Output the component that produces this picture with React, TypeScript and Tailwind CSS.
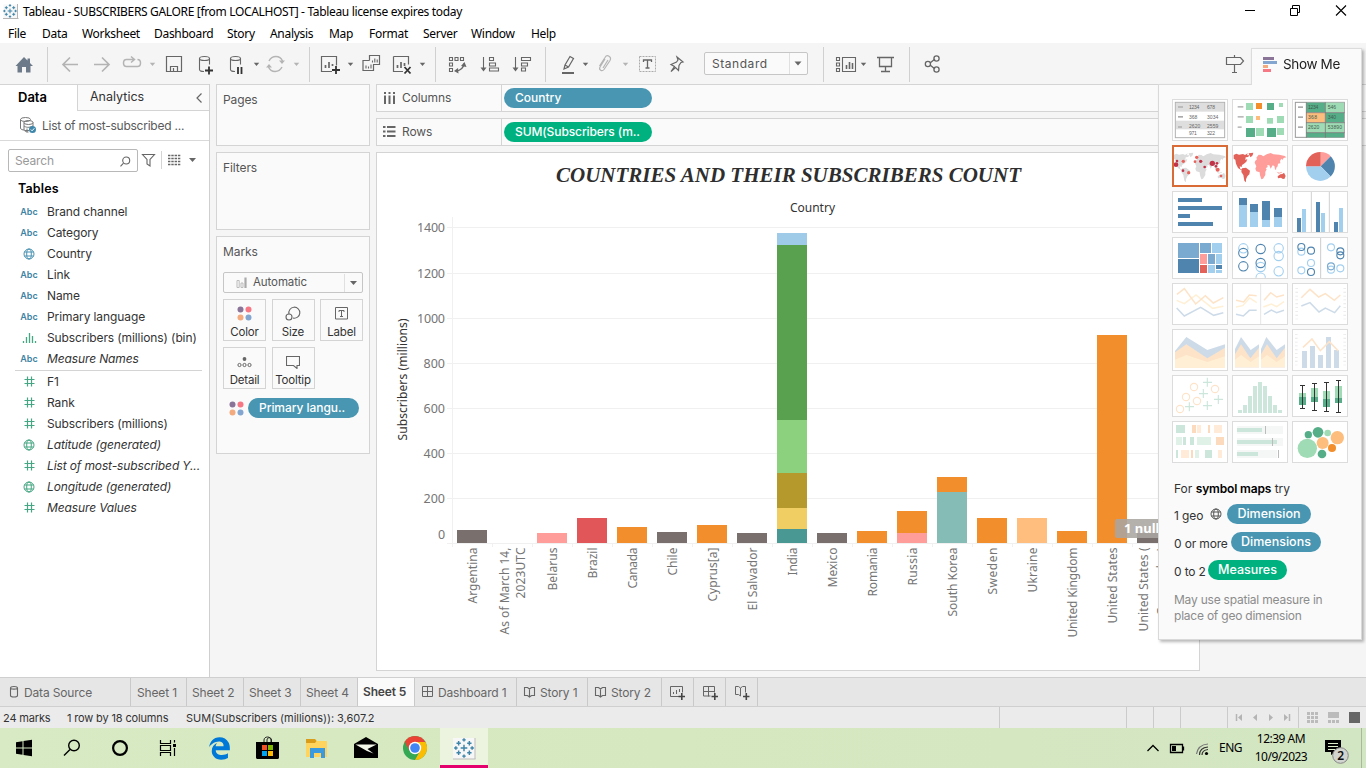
import React from 'react';
import { FaEdgeLegacy } from 'react-icons/fa6';

type Kids = { children?: React.ReactNode };

/* A fixed-width strip of a bar. Shapes inside use the window's coordinates. */
function Slot({ x, y, w, h, children }: { x: number; y: number; w: number; h: number } & Kids) {
  return (
    <svg width={w} height={h} viewBox={`${x} ${y} ${w} ${h}`} fill="none" className="block shrink-0">
      {children}
    </svg>
  );
}

const Caret = ({ x, y = 64, c = '#666' }: { x: number; y?: number; c?: string }) => (
  <path d={`M${x - 2.7} ${y - 1.3}h5.4l-2.7 3.2z`} fill={c} />
);
const Sep = ({ x }: { x: number }) => <path d={`M${x} 47v35`} stroke="#d0d0d0" />;

function TableauMark({ x, y }: { x: number; y: number }) {
  const crosses = [
    [0, -5.6, 1.2], [0, 5.6, 1.2], [-5.6, 0, 1.2], [5.6, 0, 1.2],
    [-3.7, -3.3, 1.5], [3.7, -3.3, 1.5], [-3.7, 3.3, 1.5], [3.7, 3.3, 1.5], [0, 0, 2.3],
  ];
  return (
    <g stroke="#3d84a8" strokeWidth="1">
      {crosses.map(([dx, dy, r], i) => (
        <path key={i} d={`M${x + dx - r} ${y + dy}h${2 * r}M${x + dx} ${y + dy - r}v${2 * r}`} />
      ))}
    </g>
  );
}

function TitleBar() {
  return (
    <div className="flex h-6 items-center bg-white font-['Noto_Sans'] text-[12px] text-black">
      <Slot x={0} y={0} w={23} h={24}>
        <path d="M3.5 4.500h14v14h-14z" fill="#f7f7f7" />
        <path d="M3 18.500h15.500M17.500 4v14" stroke="#b5b5b5" />
        <TableauMark x={10} y={11} />
      </Slot>
      <span className="w-[1216px] whitespace-nowrap text-[12px] tracking-[-0.335px]">
        Tableau - SUBSCRIBERS GALORE [from LOCALHOST] - Tableau license expires today
      </span>
      <Slot x={1239} y={0} w={127} h={24}>
        <path d="M1245 10.500h10" stroke="#000" />
        <path d="M1290.500 8.500h7v7h-7zM1292.500 8v-2.500h7v7h-2" stroke="#000" />
        <path d="M1336 5.500l10 10M1346 5.500l-10 10" stroke="#000" strokeWidth="1.1" />
      </Slot>
    </div>
  );
}

function MenuBar() {
  return (
    <div className="flex h-[19px] items-center bg-white pl-2 font-['Noto_Sans'] text-[12px] tracking-[-0.3px] text-black">
      <span className="w-[34px]">File</span>
      <span className="w-[40px]">Data</span>
      <span className="w-[72px]">Worksheet</span>
      <span className="w-[73px]">Dashboard</span>
      <span className="w-[43px]">Story</span>
      <span className="w-[59px]">Analysis</span>
      <span className="w-[40px]">Map</span>
      <span className="w-[54px]">Format</span>
      <span className="w-[48px]">Server</span>
      <span className="w-[60px]">Window</span>
      <span>Help</span>
    </div>
  );
}

function Toolbar() {
  const g = '#666';
  const d = '#b4b4b4';
  return (
    <div className="flex h-[41px] shrink-0 bg-[#f5f5f5]">
      <Slot x={0} y={43} w={56} h={41}>
        <path d="M15.500 66L24 57l3.500 3.500V58.500h2.500V63l3 3h-2.500v6.500h-4.500v-5.500h-4v5.500h-4.500V66z" fill="#6d7a8a" />
        <Sep x={47.5} />
      </Slot>
      <Slot x={56} y={43} w={102} h={41}>
        <path d="M78 64.500H63M70 57.500l-7 7 7 7M94 64.500h15M102 57.500l7 7-7 7" stroke={d} strokeWidth="1.7" />
        <path d="M134 59.500h-7.500c-4 0-4 7 0 7h11c4 0 4-7 0-7M131 56.500l3.500 3-3.500 3" stroke={d} strokeWidth="1.5" />
        <Caret x={152.500} c={d} />
      </Slot>
      <Slot x={158} y={43} w={102} h={41}>
        <path d="M166.500 56.500h15v15h-15zM170.500 71.500v-5h7v5M173.500 68v3" stroke={g} strokeWidth="1.2" />
        <g stroke={g} strokeWidth="1.1">
          <ellipse cx="204.500" cy="58.500" rx="5" ry="2" />
          <path d="M199.500 58.500v11c0 1 2 2 4.500 2M209.500 58.500v6" />
          <ellipse cx="235.500" cy="58.500" rx="5" ry="2" />
          <path d="M230.500 58.500v11c0 1 2 2 4.500 2M240.500 58.500v6" />
        </g>
        <path d="M205 70.500h8M209 66.500v8" stroke="#333" strokeWidth="1.8" />
        <path d="M238 67v7M241.500 67v7" stroke="#333" strokeWidth="1.8" />
        <Caret x={256.500} />
      </Slot>
      <Slot x={260} y={43} w={60} h={41}>
        <path d="M269 61c3-6 11-6 13.500 0M282 67c-3 6-11 6-13.500 0" stroke={d} strokeWidth="1.4" />
        <path d="M285 60.500l-3 3.500-3-3.500zM266 67.500l3-3.500 3 3.500z" fill={d} />
        <Caret x={296.500} c={d} />
        <Sep x={309.5} />
      </Slot>
      <Slot x={320} y={43} w={124} h={41}>
        <g stroke={g} strokeWidth="1.2">
          <path d="M332 71.500h-10.500v-15h15v9M393.500 56.500h15v8M403 71.500h-9.500v-15" />
          <path d="M325.500 68v-3M329 68v-6M332.500 66v-2M397.500 68v-3M401 68v-6M404.500 66v-3" strokeWidth="1.7" />
          <path d="M369.500 60.500v-5h10v9h-6.500M369.500 60.500h-6.500v10h10.500v-6" />
          <path d="M366 68.500v-3M368.500 68.500v-2M371 68.500v-4M372.500 62.500v-2M374.800 62.500v-4M377.200 62.500v-3" strokeWidth="1.1" />
        </g>
        <path d="M332 70h8M336 66v8" stroke="#333" strokeWidth="1.8" />
        <path d="M404.500 67l6 6.500M410.500 67l-6 6.500" stroke="#333" strokeWidth="1.8" />
        <Caret x={350.500} />
        <Caret x={422.500} />
        <Sep x={435.5} />
      </Slot>
      <Slot x={444} y={43} w={106} h={41}>
        <g stroke={g} strokeWidth="1.1">
          <path d="M449.500 57.500h3v3h-3zM455 57.500h3v3h-3zM460.500 57.500h3v3h-3zM449.500 63h3v3h-3zM449.500 68.500h3v3h-3z" />
          <path d="M464 63.500c-.5 4-3 7-8 7.500" strokeWidth="1.4" />
          <path d="M483.500 57v11M489.500 57.500h4v3h-4zM489.500 63h6v3h-6zM489.500 68h9v3h-9z" />
          <path d="M515.500 57v11M521.500 57.500h9v3h-9zM521.500 63h6v3h-6zM521.500 68h4v3h-4z" />
        </g>
        <path d="M461 66l3.500-4 2 5zM458 68l-4 3 4.500 2.500zM480.500 67.500h6l-3 4zM512.500 67.500h6l-3 4z" fill={g} />
        <Sep x={545.5} />
      </Slot>
      <Slot x={550} y={43} w={154} h={41}>
        <path d="M564 69l1-4 5-8.500 3.500 2-5 8.500zM565 65l3.500 2" stroke={g} strokeWidth="1.2" />
        <path d="M562 73h12" stroke={g} strokeWidth="2" />
        <path d="M605 59l-5 8c-1.500 3 2 5 4 2.500l6-9c2-4-3-6.500-5-3l-5.500 8.500M608 60l-5 8" stroke={d} strokeWidth="1.2" />
        <path d="M639.500 56.500h16v15h-16z" stroke="#aaa" strokeDasharray="2 1" />
        <path d="M643.500 62v-2h8v2M647.500 60v8M645.500 68h4" stroke={g} strokeWidth="1.3" />
        <path d="M677 57l6 5-2 .5-2 3-.5 5-3-3-4.500 4 3.500-5-3.500-2 5.500-2.500 1.500-2z" stroke={g} strokeWidth="1.2" />
        <Caret x={585.500} />
        <Caret x={625.500} c={d} />
      </Slot>
      <div className="mt-[9px] flex h-[23px] w-[104px] items-center rounded-[2px] border border-[#c6c6c6] bg-[#fafafa] font-['Inter'] text-[12px] tracking-[0.55px] text-[#555]">
        <span className="w-[84px] pl-[7px]">Standard</span>
        <div className="flex h-full w-[18px] items-center border-l border-[#e0e0e0]">
          <Slot x={790} y={53} w={17} h={21}><path d="M794.500 61.500h7l-3.500 4z" fill={g} /></Slot>
        </div>
      </div>
      <Slot x={808} y={43} w={443} h={41}>
        <Sep x={823.5} />
        <path d="M836.500 57.500h3v3h-3zM836.500 63h3v3h-3zM836.500 68.500h3v3h-3zM842.500 57.500h13v14h-13z" stroke={g} strokeWidth="1.1" />
        <path d="M846.500 69v-4M849.500 69v-7M852.500 69v-6" stroke={g} strokeWidth="1.6" />
        <Caret x={863.500} />
        <path d="M877 57.500h17M879.500 58v8.500h12V58M885.500 66.500v5M881 71.500h9" stroke={g} strokeWidth="1.3" />
        <Sep x={909.5} />
        <path d="M930 63l5-4M930 65l5 4" stroke={g} strokeWidth="1.4" />
        <circle cx="927.900" cy="64" r="2.600" stroke={g} strokeWidth="1.3" />
        <circle cx="936.500" cy="58.500" r="2.600" stroke={g} strokeWidth="1.3" />
        <circle cx="936.500" cy="69.500" r="2.600" stroke={g} strokeWidth="1.3" />
        <path d="M1226.500 57.500h14l3 3.500-3 3.500h-14zM1234.500 55v2M1234.500 64.500v8M1232 72.500h5" stroke={g} strokeWidth="1.2" />
      </Slot>
      <div className="grow" />
    </div>
  );
}

const Globe = ({ c }: { c: string }) => (
  <svg width="12" height="12" viewBox="0 0 12 12" fill="none" stroke={c} className="block shrink-0">
    <circle cx="6" cy="6" r="5" />
    <ellipse cx="6" cy="6" rx="2.300" ry="5" />
    <path d="M1.500 4h9M1.500 8h9" />
  </svg>
);
const Hash = () => (
  <svg width="11" height="11" viewBox="0 0 11 11" fill="none" stroke="#45a683" strokeWidth="1.200" className="block">
    <path d="M3.500 .5v10M7.500 .5v10M.5 3.500h10M.5 7.500h10" />
  </svg>
);

function Field({ kind, name, italic }: { kind: string; name: string; italic?: boolean }) {
  return (
    <div className="flex h-[21px] items-center">
      <div className="flex w-[47px] justify-center pl-[11px]">
        {kind === 'abc' && <span className="pt-[1px] text-[9px] font-semibold text-[#3e83a4]">Abc</span>}
        {kind === 'geo' && <Globe c="#4a92b1" />}
        {kind === 'geom' && <Globe c="#45a683" />}
        {kind === 'num' && <Hash />}
        {kind === 'bin' && (
          <svg width="15" height="11" viewBox="0 0 15 11" stroke="#45a683" strokeWidth="1.300" className="block">
            <path d="M1.500 11V9M4.500 11V5M7.500 11V1M10.500 11V4M13.500 11V9" />
          </svg>
        )}
      </div>
      <span className={italic ? 'pt-px whitespace-nowrap tracking-[-0.12px] italic' : 'pt-px whitespace-nowrap tracking-[-0.1px]'}>{name}</span>
    </div>
  );
}

function DataPane() {
  return (
    <aside className="flex w-[210px] shrink-0 flex-col border-r border-[#cfcfcf] bg-white text-[12px] text-[#333]">
      <div className="flex h-[27px] shrink-0 border-t border-[#d4d4d4]">
        <div className="w-[77px] pl-[18px] text-[13px] leading-[25px] font-semibold text-black">Data</div>
        <div className="flex grow items-center justify-between border-b border-l border-[#d4d4d4] bg-[#fafafa] pr-[7px] pl-3 text-[12.500px]">
          Analytics
          <svg width="6" height="10" viewBox="0 0 6 10" fill="none" stroke="#666" strokeWidth="1.200"><path d="M5.500 .5L1 5l4.500 4.500" /></svg>
        </div>
      </div>
      <div className="flex h-[30px] shrink-0 items-center border-b border-[#d9d9d9] text-[#5a5a5a]">
        <Slot x={0} y={111} w={42} h={29}>
          <g stroke="#777">
            <path d="M20.500 119.500v8.500c0 1.500 2 2 4 2" />
            <ellipse cx="25.500" cy="119.500" rx="5" ry="2" />
            <ellipse cx="28.500" cy="122.500" rx="4.500" ry="2" />
            <path d="M24 122.500v7c0 1.500 2 2.500 4.500 2.500M33 122.500v4M24 126c2 1.500 5 2 9 0M25 130.500h4M27 128.500v4" />
          </g>
          <circle cx="32.500" cy="129.500" r="3.500" fill="#3e87ab" />
          <path d="M30.800 129.500l1.300 1.300 2.200-2.500" stroke="#fff" />
        </Slot>
        <span className="whitespace-nowrap tracking-[-0.24px]">List of most-subscribed ...</span>
      </div>
      <div className="mt-[8px] flex h-[23px] shrink-0 items-center pl-2">
        <div className="flex h-[23px] w-[130px] items-center justify-between rounded-[2px] border border-[#b8b8b8] pt-px pr-[6px] pl-[6px] text-[#999]">
          <span className="tracking-[-0.15px]">Search</span>
          <svg width="11" height="11" viewBox="0 0 11 11" fill="none" stroke="#666" strokeWidth="1.100"><circle cx="6.200" cy="4.500" r="3.500" /><path d="M3.500 7.200L.5 10.300" /></svg>
        </div>
        <Slot x={138} y={149} w={71} h={23}>
          <path d="M142.500 154.500h12l-4.500 5v6.500l-3-2v-4.500z" stroke="#666" strokeWidth="1.100" />
          <path d="M161.500 151v18" stroke="#d4d4d4" />
          <path d="M168 155.500h12.500M168 158.500h12.500M168 161.500h12.500M168 164.500h12.500" stroke="#666" strokeWidth="1.300" strokeDasharray="2.400 .9" />
          <path d="M189 158h7l-3.500 4z" fill="#666" />
        </Slot>
      </div>
      <div className="mt-[7px] h-[22px] shrink-0 pl-[18px] text-[12.500px] leading-[19px] font-semibold tracking-[0.15px] text-black">Tables</div>
      <div>
        <Field kind="abc" name="Brand channel" />
        <Field kind="abc" name="Category" />
        <Field kind="geo" name="Country" />
        <Field kind="abc" name="Link" />
        <Field kind="abc" name="Name" />
        <Field kind="abc" name="Primary language" />
        <Field kind="bin" name="Subscribers (millions) (bin)" />
        <Field kind="abc" name="Measure Names" italic />
      </div>
      <div className="mx-[15px] mr-[7px] mt-px h-px shrink-0 bg-[#d4d4d4]" />
      <div>
        <Field kind="num" name="F1" />
        <Field kind="num" name="Rank" />
        <Field kind="num" name="Subscribers (millions)" />
        <Field kind="geom" name="Latitude (generated)" italic />
        <Field kind="num" name="List of most-subscribed Y..." italic />
        <Field kind="geom" name="Longitude (generated)" italic />
        <Field kind="num" name="Measure Values" italic />
      </div>
    </aside>
  );
}

const FourDots = () => (
  <svg width="15" height="15" viewBox="0 0 15 15" className="block">
    <circle cx="3.500" cy="3.500" r="3" fill="#8a7599" />
    <circle cx="11.500" cy="3.500" r="3" fill="#f77885" />
    <circle cx="3.500" cy="11.500" r="3" fill="#f2aa7e" />
    <circle cx="11.500" cy="11.500" r="3" fill="#82a6cf" />
  </svg>
);

function MarkButton({ label, children }: { label: string } & Kids) {
  return (
    <div className="flex h-[42px] w-[43px] flex-col items-center border border-[#d4d4d4] bg-[#fafafa] pt-[6px]">
      <div className="flex h-[15px] items-center justify-center">{children}</div>
      <span className="mt-[4px] text-[11.500px] leading-[14px] whitespace-nowrap tracking-[-0.2px] text-[#333]">{label}</span>
    </div>
  );
}

function Cards() {
  const box = 'border border-[#d4d4d4] bg-[#fafafa] pl-[6px] text-[12px] text-[#555]';
  return (
    <div className="ml-[6px] flex w-[154px] shrink-0 flex-col gap-[6px] tracking-[-0.1px]">
      <div className={`h-[62px] pt-[6px] ${box}`}>Pages</div>
      <div className={`h-[78px] pt-[6px] ${box}`}>Filters</div>
      <div className={`h-[218px] pt-[6px] ${box}`}>
        Marks
        <div className="mt-[11px] flex h-[21px] w-[140px] items-center rounded-[2px] border border-[#c6c6c6] pt-px text-[11.500px]">
          <svg width="29" height="12" viewBox="0 0 29 12" fill="none" className="shrink-0">
            <path d="M13 3.500h2.200V10.500H13zM17 6h2v4.500h-2z" stroke="#bbb" />
            <path d="M21.500 11V.5" stroke="#aaa" strokeWidth="2.200" />
          </svg>
          <span className="grow">Automatic</span>
          <div className="flex h-full w-[18px] items-center justify-center border-l border-[#e0e0e0]">
            <svg width="7" height="5" viewBox="0 0 7 5"><path d="M0 0h7L3.500 4z" fill="#666" /></svg>
          </div>
        </div>
        <div className="mt-[6px] flex w-[142px] flex-wrap gap-x-[5.500px] gap-y-[6px]">
          <MarkButton label="Color"><FourDots /></MarkButton>
          <MarkButton label="Size">
            <svg width="16" height="15" viewBox="0 0 16 15" fill="none" stroke="#666" strokeWidth="1.100">
              <path d="M4 8a5.500 5.500 0 1 1 4 4" /><circle cx="4" cy="11" r="3" />
            </svg>
          </MarkButton>
          <MarkButton label="Label">
            <svg width="13" height="13" viewBox="0 0 13 13" fill="none" stroke="#666">
              <path d="M.5 .5h12v11.500H.5zM4 5V3.500h5V5M6.500 3.500V9.500M5 9.500h3" />
            </svg>
          </MarkButton>
          <MarkButton label="Detail">
            <svg width="15" height="12" viewBox="0 0 15 12" fill="none" stroke="#666" className="shrink-0">
              <circle cx="7.500" cy="3" r="1.900" fill="#666" stroke="none" />
              <circle cx="2.500" cy="9" r="1.600" /><circle cx="7.500" cy="9" r="1.600" /><circle cx="12.500" cy="9" r="1.600" />
            </svg>
          </MarkButton>
          <MarkButton label="Tooltip">
            <svg width="14" height="14" viewBox="0 0 14 14" fill="none" stroke="#666" strokeWidth="1.100" className="shrink-0">
              <path d="M.5 1.500h13v9H11v3L7.500 10.500H.5z" />
            </svg>
          </MarkButton>
        </div>
        <div className="mt-[9px] flex items-center pl-[6px]">
          <FourDots />
          <div className="ml-[4px] h-5 w-[111px] rounded-full bg-[#4996b2] pl-[11px] text-[12px] leading-[20px] font-medium tracking-[-0.05px] text-white">Primary langu..</div>
        </div>
      </div>
    </div>
  );
}

function Shelf({ label, pill, rows }: { label: string; pill: string; rows?: boolean }) {
  return (
    <div className="flex h-[28px] shrink-0 border border-r-0 border-[#d4d4d4] bg-[#fafafa] text-[12px] text-[#555]">
      <div className="flex w-[125px] items-center border-r border-[#d4d4d4] pl-[6px]">
        <svg width="19" height="12" viewBox="0 0 19 12" fill="none" stroke="#666" strokeWidth="2" className="shrink-0">
          {rows ? (
            <path d="M0 1h2.500M4 1h8.500M0 5.500h2.500M4 5.500h8.500M0 10h2.500M4 10h8.500" />
          ) : (
            <path d="M2 0v2M2 3.500V12M6.500 0v2M6.500 3.500V12M11 0v2M11 3.500V12" />
          )}
        </svg>
        <span className="tracking-[-0.1px]">{label}</span>
      </div>
      <div className={`mt-[3px] ml-[2px] h-5 w-[148px] rounded-full pl-[11px] leading-[20px] font-medium text-white ${rows ? 'bg-[#00b180] tracking-[-0.1px]' : 'bg-[#4996b2] tracking-[0px]'}`}>
        {pill}
      </div>
    </div>
  );
}

const GRAY = '#79706e';
const ORANGE = '#f28e2b';
type Seg = [number, number, string];
const countries: { name: string; len: number; segs: Seg[] }[] = [
  { name: 'Argentina', len: 56, segs: [[530, 543, GRAY]] },
  { name: '', len: 0, segs: [] },
  { name: 'Belarus', len: 43, segs: [[533, 543, '#ff9d9a']] },
  { name: 'Brazil', len: 31, segs: [[518, 543, '#e15759']] },
  { name: 'Canada', len: 41, segs: [[527, 543, ORANGE]] },
  { name: 'Chile', len: 28, segs: [[532, 543, GRAY]] },
  { name: 'Cyprus[a]', len: 54, segs: [[525, 543, ORANGE]] },
  { name: 'El Salvador', len: 63, segs: [[533, 543, GRAY]] },
  { name: 'India', len: 28, segs: [[233, 245, '#a0cbe8'], [245, 420, '#59a14f'], [420, 473, '#8cd17d'], [473, 508, '#b6992d'], [508, 529, '#f1ce63'], [529, 543, '#499894']] },
  { name: 'Mexico', len: 40, segs: [[533, 543, GRAY]] },
  { name: 'Romania', len: 49, segs: [[531, 543, ORANGE]] },
  { name: 'Russia', len: 38, segs: [[511, 533, ORANGE], [533, 543, '#ff9d9a']] },
  { name: 'South Korea', len: 69, segs: [[477, 492, ORANGE], [492, 543, '#86bcb6']] },
  { name: 'Sweden', len: 47, segs: [[518, 543, ORANGE]] },
  { name: 'Ukraine', len: 45, segs: [[518, 543, '#ffbe7d']] },
  { name: 'United Kingdom', len: 90, segs: [[531, 543, ORANGE]] },
  { name: 'United States', len: 76, segs: [[335, 543, ORANGE]] },
  { name: '', len: 0, segs: [[533, 543, GRAY]] },
];

function VText({ x, len, children, end = 547.5 }: { x: number; len: number; end?: number; children: string }) {
  return (
    <text transform={`translate(${x} ${end + len}) rotate(-90)`} textLength={len}>{children}</text>
  );
}

function Chart() {
  const ticks: [string, number, number][] = [
    ['1400', 227.5, 28], ['1200', 273.5, 28], ['1000', 318.5, 28], ['800', 363.5, 21.5],
    ['600', 408.5, 21.5], ['400', 453.5, 21.5], ['200', 498.5, 21.5],
  ];
  return (
    <div className="h-[519px] w-[824px] shrink-0 border border-[#d4d4d4] bg-white">
      <svg width="822" height="517" viewBox="377 153 822 517" className="block font-['Noto_Sans']">
        <text x="556" y="182" textLength="465" fill="#2e2e2e" className="font-['Liberation_Serif'] text-[21px] font-bold italic">
          COUNTRIES AND THEIR SUBSCRIBERS COUNT
        </text>
        <text x="790" y="212" textLength="45" fontSize="12" fill="#333">Country</text>
        <g stroke="#f0f0f0">
          {ticks.map(([t, y]) => <path key={t} d={`M447 ${y}H1199`} />)}
          <path d="M447 543.500H1199M452.500 217v330" />
          {countries.map((_, i) => <path key={i} d={`M${492.5 + 40 * i} 543v4`} />)}
        </g>
        <g fontSize="12.500" fill="#757575">
          {ticks.map(([t, y, l]) => <text key={t} x={445 - l} y={y + 4.5} textLength={l}>{t}</text>)}
          <text x="438" y="539">0</text>
        </g>
        <text transform="translate(406.500 440.500) rotate(-90)" textLength="122" fontSize="12" fill="#333">Subscribers (millions)</text>
        {countries.map((c, i) =>
          c.segs.map(([a, b, fill]) => <rect key={`${i}-${a}`} x={457 + 40 * i} y={a} width="30" height={b - a} fill={fill} />)
        )}
        <g fontSize="12" fill="#757575">
          {countries.map((c, i) => c.name && <VText key={c.name} x={476.5 + 40 * i} len={c.len}>{c.name}</VText>)}
          <VText x={508.5} len={87}>As of March 14,</VText>
          <VText x={525} len={51}>2023UTC</VText>
          <VText x={1148} len={84}>United States (</VText>
          <VText x={1165.500} len={68}>Canada)</VText>
        </g>
        <rect x="1115" y="519" width="70" height="19" rx="2" fill="#aaa5a1" fillOpacity=".88" />
        <text x="1124" y="533" fontSize="13" fontWeight="700" fill="#fff">1 nulls</text>
      </svg>
    </div>
  );
}

function Continents({ west, east }: { west: string; east: string }) {
  return (
    <g>
      <path fill={west} d="M5 30l8-4 8 3 12-2 6 3 8-5-2 6 6-1-2 6-8 1-1 8 6-3-3 8-7 6-6 4-1 6-6-2 2 8 6 2-3 2-10-7-6-13-2-12-5-3zM50 25l14-2-2 8-6 6-4-6zM30 70l12-2 12 9-2 11-6 6-4 9 0 9-5-5-3-17-6-9z" />
      <path fill={east} d="M68 53l2-6 5-4-2-5 7-9 8 1 6 4 10-6 12-4 8 4 18 1 16 4 5 4-8 2-4 6-3-4-4 7 1 7-7 1-1 8-4 4-1 7-3-2-2-10-5-2-6 10-4-10-6-1 1 6-6 4 3 3-4 8 0 9-7 11-5 2-4-12-1-9-10-3-3-8 3-7zM134 80l8 3 8-3-1 3-9 3z" />
      <path fill={west} d="M137 94l8-6 6-1 5-4 5 10-4 9-6-1-4-3-9 2z" />
    </g>
  );
}

function Rects({ c, r }: { c: string; r: number[][] }) {
  return <g fill={c}>{r.map(([x, y, w, h], i) => <rect key={i} x={x} y={y} width={w} height={h} />)}</g>;
}
function Rings({ c, p, r }: { c: string; p: number[][]; r: number }) {
  return <g fill="none" stroke={c} strokeWidth="3.300">{p.map(([x, y], i) => <circle key={i} cx={x} cy={y} r={r} />)}</g>;
}

function Thumb({ children, on }: { on?: boolean } & Kids) {
  return (
    <svg width="56" height="42" viewBox="0 0 168 126" fill="none" className="block">
      <rect x="1.500" y="1.500" width="165" height="123" fill="#fff" stroke="#dcdcdc" strokeWidth="3" />
      {children}
      {on && <rect x="3" y="3" width="162" height="120" stroke="#d96c36" strokeWidth="6" />}
    </svg>
  );
}

const B = '#4e84ae';
const LB = '#a3cfef';
const MB = '#7baad0';
const G = '#56ae88';
const LG = '#9fdcb5';
const PB = '#cddbe9';
const PO = '#fde3c8';
const PY = '#fff0d5';
const PG = '#cce6db';

function Thumbs() {
  return (
    <div className="grid grid-cols-[56px_56px_56px] gap-1">
      <Thumb>
        <rect x="10" y="10" width="148" height="106" stroke="#b0b0b0" strokeWidth="3" />
        <Rects c="#dedede" r={[[12, 12, 144, 26], [12, 65, 144, 26]]} />
        <Rects c="#aaa" r={[[18, 22, 15, 4], [18, 51, 15, 5], [18, 82, 12, 4]]} />
        <g fill="#666" fontSize="15" className="font-['Liberation_Sans']">
          <text x="51" y="31" textLength="31">1234</text><text x="105" y="31" textLength="24">678</text>
          <text x="51" y="59" textLength="25">368</text><text x="105" y="59" textLength="34">3034</text>
          <text x="51" y="86" textLength="34">2620</text><text x="105" y="86" textLength="34">2559</text>
          <text x="51" y="109" textLength="23">971</text><text x="105" y="109" textLength="24">322</text>
        </g>
      </Thumb>
      <Thumb>
        <Rects c="#bbb" r={[[17, 21, 17, 5], [17, 51, 18, 5], [17, 82, 12, 5]]} />
        <Rects c={LG} r={[[42, 12, 21, 21], [141, 12, 12, 12], [42, 51, 21, 21], [105, 57, 18, 17], [135, 51, 21, 21], [72, 87, 24, 24], [135, 87, 21, 21]]} />
        <Rects c={G} r={[[105, 12, 21, 21], [42, 87, 27, 27], [105, 87, 27, 27]]} />
        <Rects c="#f28e2b" r={[[72, 12, 18, 18]]} /><Rects c="#fdbd7c" r={[[72, 51, 12, 12]]} />
      </Thumb>
      <Thumb>
        <rect x="10" y="10" width="147" height="105" stroke="#999" strokeWidth="3" />
        <Rects c={G} r={[[43, 11, 57, 29], [100, 41, 56, 30], [43, 101, 113, 14]]} />
        <Rects c={LG} r={[[100, 11, 56, 29], [43, 71, 113, 30]]} /><Rects c="#fdbd7c" r={[[43, 41, 57, 30]]} />
        <path d="M43 10v106M100 10v106M42 41h116M42 71h116M42 101h116" stroke="#777" strokeWidth="2.500" />
        <Rects c="#aaa" r={[[18, 22, 15, 5], [18, 52, 15, 5], [18, 82, 15, 5]]} />
        <g fill="#3f5c4c" fontSize="15" className="font-['Liberation_Sans']">
          <text x="48" y="31" textLength="31">1234</text><text x="107" y="31" textLength="25">546</text>
          <text x="48" y="61" textLength="27">368</text><text x="107" y="61" textLength="25">340</text>
          <text x="48" y="91" textLength="34">2620</text><text x="107" y="91" textLength="43">53890</text>
        </g>
      </Thumb>

      <Thumb on>
        <Continents west="#dcdcdc" east="#dcdcdc" />
        <g fill="#c2334a">
          <circle cx="12" cy="59" r="7" /><circle cx="15" cy="48" r="4" /><circle cx="86" cy="49" r="5" /><circle cx="121" cy="55" r="8" />
          <circle cx="135" cy="55" r="4" /><circle cx="33" cy="77" r="4" /><circle cx="98" cy="66" r="4" /><circle cx="132" cy="64" r="4" />
        </g>
        <g fill="#e8625b">
          <circle cx="34" cy="49" r="5" /><circle cx="74" cy="37" r="5" /><circle cx="137" cy="74" r="6" /><circle cx="50" cy="83" r="5" /><circle cx="147" cy="93" r="4" /><circle cx="69" cy="50" r="4" />
        </g>
      </Thumb>
      <Thumb><Continents west="#e2625a" east="#ff9d9a" /></Thumb>
      <Thumb>
        <path d="M86 64V21a43 43 0 0 1 30 12.500z" fill="#ff9d9a" />
        <path d="M86 64l30-30.500a43 43 0 0 1 0 61z" fill={B} />
        <path d="M86 64l30 30.500A43 43 0 0 1 42 64z" fill={LB} />
        <path d="M86 64H42A43 43 0 0 1 86 21z" fill="#e2625a" />
      </Thumb>

      <Thumb><Rects c={B} r={[[18, 21, 72, 12], [18, 45, 132, 12], [18, 69, 36, 12], [18, 93, 105, 12]]} /></Thumb>
      <Thumb>
        <Rects c={B} r={[[21, 21, 24, 21], [54, 39, 24, 24], [90, 30, 24, 57], [126, 51, 24, 27]]} />
        <Rects c={LB} r={[[21, 42, 24, 66], [54, 63, 24, 45], [90, 87, 24, 21], [126, 78, 24, 30]]} />
      </Thumb>
      <Thumb>
        <path d="M58 3v120M112 3v120" stroke="#d0d0d0" strokeWidth="3" />
        <Rects c={B} r={[[15, 81, 12, 42], [72, 33, 12, 90], [126, 93, 12, 30]]} />
        <Rects c={LB} r={[[30, 54, 12, 69], [87, 66, 12, 57], [141, 51, 12, 72]]} />
      </Thumb>

      <Thumb>
        <Rects c={MB} r={[[18, 18, 63, 45], [84, 18, 33, 30], [108, 51, 21, 30]]} />
        <Rects c={B} r={[[18, 66, 63, 42], [132, 84, 18, 12]]} />
        <Rects c={LB} r={[[120, 18, 30, 30], [132, 51, 18, 30], [108, 84, 21, 24], [132, 99, 18, 9]]} />
        <Rects c="#ff9d9a" r={[[84, 51, 21, 30]]} /><Rects c="#e2625a" r={[[84, 84, 21, 24]]} />
      </Thumb>
      <Thumb>
        <Rings c={LB} r={14} p={[[34, 34], [140, 34], [140, 57], [86, 90], [140, 103]]} />
        <path d="M72 122a14 14 0 0 1 28 0" stroke={LB} strokeWidth="3.300" />
        <Rings c={B} r={14} p={[[34, 48], [34, 88], [86, 36], [86, 78]]} />
      </Thumb>
      <Thumb>
        <path d="M86 3v120" stroke="#ccc" strokeWidth="3" />
        <Rings c={LB} r={10.500} p={[[28, 44], [57, 78], [28, 100], [117, 31], [117, 98], [145, 94]]} />
        <Rings c={B} r={10.500} p={[[28, 30], [57, 41], [57, 105], [145, 43], [145, 55]]} />
        <Rings c={MB} r={10.500} p={[[117, 88]]} />
      </Thumb>

      <Thumb>
        <g strokeWidth="4.500">
          <path d="M14 52l23 10 35-26 50 40 32-6" stroke={PY} />
          <path d="M15 34l22-17 34 46 29-25 24 22 30-16" stroke={PO} />
          <path d="M14 75l23 24 49-26 39 24 29-8" stroke={PB} />
        </g>
      </Thumb>
      <Thumb>
        <path d="M86 3v120" stroke="#e5e5e5" strokeWidth="3" />
        <g strokeWidth="4.500">
          <path d="M12 52l23 5 17-21 22 2M96 52l20-23 18 13 22-6" stroke={PO} />
          <path d="M12 72l20-4 21-23 21 14M94 72l24-9 16 8 22-15" stroke={PY} />
          <path d="M12 94l22 5 18-17h22M96 94l22-13 16 8 22-7" stroke={PB} />
        </g>
      </Thumb>
      <Thumb>
        <path d="M14 15v94M158 15v94" stroke="#e8e8e8" strokeWidth="8" strokeDasharray="2.500 9" />
        <g strokeWidth="4.500"><path d="M28 44l26-25 26 23 20-10 27 20 18-16" stroke={PO} /><path d="M28 69l26-10 27 28 19-12 28 14 17-21" stroke={PB} /></g>
      </Thumb>

      <Thumb>
        <path d="M9 66l34-42 63 39 53-17v69H9z" fill={PB} /><path d="M9 70l34-24 63 42 53-32v60H9z" fill={PO} /><path d="M9 92l34-14 63 21 53-17v34H9z" fill={PY} />
      </Thumb>
      <Thumb>
        <path d="M9 60l18-36 29 39 25-17v69H9zM87 60l16-36 31 39 25-17v69H87z" fill={PB} />
        <path d="M9 76l18-30 28 42 26-32v59H9zM87 76l18-30 29 42 25-32v59H87z" fill={PO} />
        <path d="M9 92l18-14 29 21 25-17v33H9zM87 92l18-14 29 21 25-17v33H87z" fill={PY} />
      </Thumb>
      <Thumb>
        <path d="M13 15v94M158 15v94" stroke="#e8e8e8" strokeWidth="8" strokeDasharray="2.500 9" />
        <Rects c={PB} r={[[30, 66, 15, 51], [54, 51, 15, 66], [78, 78, 15, 39], [102, 24, 15, 93], [126, 63, 15, 54]]} />
        <path d="M33 55l27-25 25 35 27-27 27 28" stroke={PO} strokeWidth="4.500" />
      </Thumb>

      <Thumb>
        <Rings c={PO} r={11} p={[[66, 36], [129, 42], [42, 66], [75, 78], [24, 102]]} />
        <path d="M93 22h27M106 8v27M81 56h27M94 42v27M126 73h27M139 60v27M93 92h27M106 78v27M39 95h27M52 82v27" stroke={PG} strokeWidth="3.500" />
      </Thumb>
      <Thumb><Rects c={PG} r={[[18, 105, 12, 9], [33, 90, 12, 24], [48, 63, 12, 51], [63, 33, 12, 81], [78, 21, 12, 93], [93, 33, 12, 81], [108, 63, 12, 51], [123, 90, 12, 24], [138, 105, 12, 9]]} /></Thumb>
      <Thumb>
        <Rects c={LG} r={[[21, 54, 21, 12], [57, 39, 21, 27], [93, 48, 21, 24], [129, 33, 21, 36]]} />
        <Rects c={G} r={[[21, 66, 21, 24], [57, 66, 21, 15], [93, 72, 21, 24], [129, 69, 21, 15]]} />
        <path d="M31.500 31v69M24 31.500h15M24 100.500h15M67.500 25v81M60 25.500h15M60 106.500h15M103.500 22v87M96 22.500h15M96 109.500h15M139.500 16v96M132 16.500h15M132 112.500h15" stroke="#333" strokeWidth="3" />
      </Thumb>

      <Thumb>
        <Rects c={PG} r={[[12, 12, 27, 24], [33, 48, 9, 24], [54, 48, 12, 24], [12, 87, 6, 24], [99, 87, 21, 24]]} />
        <Rects c="#fbdabd" r={[[60, 12, 12, 24], [108, 12, 6, 24], [132, 48, 24, 24], [57, 87, 6, 24]]} />
        <Rects c="#ffebd8" r={[[75, 12, 12, 24], [126, 12, 24, 24], [27, 87, 24, 24], [138, 87, 12, 24]]} />
        <Rects c="#e0f2e8" r={[[12, 48, 18, 24], [75, 48, 42, 24], [69, 87, 12, 24]]} />
      </Thumb>
      <Thumb>
        <Rects c="#f5f7f6" r={[[15, 15, 138, 24], [15, 51, 138, 24], [15, 87, 120, 24]]} />
        <Rects c={PG} r={[[15, 21, 75, 12], [15, 57, 120, 12], [15, 93, 63, 12]]} />
        <Rects c="#bbb" r={[[99, 15, 3, 24], [120, 51, 3, 24], [138, 87, 3, 24]]} />
      </Thumb>
      <Thumb>
        <circle cx="46" cy="82" r="29" fill={LG} /><circle cx="107" cy="36" r="10" fill={LG} />
        <circle cx="78" cy="34" r="16" fill={G} /><circle cx="49" cy="41" r="11" fill={G} /><circle cx="90" cy="99" r="13" fill={G} />
        <circle cx="136" cy="50" r="20" fill="#fdbd7c" /><circle cx="92" cy="66" r="18" fill="#fdbd7c" /><circle cx="120" cy="81" r="12" fill="#f28e2b" />
      </Thumb>
    </div>
  );
}

function ShowMe() {
  const pill = 'h-5 shrink-0 rounded-full text-center text-[12.500px] leading-[20px] font-medium text-white';
  return (
    <div className="absolute top-[48px] left-[1158px] flex w-[204px] flex-col drop-shadow-[2px_2px_1.500px_rgba(0,0,0,0.28)]">
      <div className="relative z-10 -mb-px flex h-[37px] w-[111px] items-center self-end border border-b-0 border-[#dcdcdc] bg-[#fafafa] pl-[11px] text-[13.500px] text-[#222]">
        <svg width="20" height="16" viewBox="0 0 20 16" className="mt-[-5px] shrink-0">
          <path d="M0 0h11v3H0z" fill="#8a7599" /><path d="M0 4h14v3H0z" fill="#82a6cf" />
          <path d="M0 8h5v3H0z" fill="#f2aa7e" /><path d="M0 12h8v3H0z" fill="#f77885" />
        </svg>
        <span className="mt-[-6px] tracking-[-0.35px] whitespace-nowrap">Show Me</span>
      </div>
      <div className="flex h-[556px] flex-col border border-[#d9d9d9] bg-[#fafafa] pt-[14px] pl-[13px] text-[12px] text-[#333]">
        <Thumbs />
        <div className="pl-[2px]">
          <div className="mt-[17px] leading-[18px]">For <b className="font-semibold tracking-[-0.15px] text-black">symbol maps</b> try</div>
          <div className="mt-[6px] flex h-[20px] items-center"><span className="w-[36px] pt-1 tracking-[-0.1px] whitespace-nowrap">1 geo</span><Globe c="#555" /><div className={`ml-[5px] w-[84px] bg-[#4996b2] ${pill}`}>Dimension</div></div>
          <div className="mt-[8px] flex h-[20px] items-center"><span className="w-[57px] pt-1 tracking-[-0.15px] whitespace-nowrap">0 or more</span><div className={`w-[90px] bg-[#4996b2] ${pill}`}>Dimensions</div></div>
          <div className="mt-[8px] flex h-[20px] items-center"><span className="w-[34px] pt-1 tracking-[-0.15px] whitespace-nowrap">0 to 2</span><div className={`w-[79px] bg-[#00b180] ${pill}`}>Measures</div></div>
          <div className="mt-[12px] leading-4 tracking-[-0.22px] whitespace-nowrap text-[#8c8c8c]">May use spatial measure in<br />place of geo dimension</div>
        </div>
      </div>
    </div>
  );
}

function SheetTabs() {
  const t = 'flex h-full items-center border-r border-[#c9c9c9] whitespace-nowrap';
  return (
    <div className="flex h-[30px] shrink-0 border-y border-[#cfcfcf] bg-[#e6e6e6] text-[12px] tracking-[-0.15px] text-[#666]">
      <div className={`${t} w-[131px]`}>
        <Slot x={0} y={678} w={24} h={28}><path d="M10.500 688v7.500c0 2 7 2 7 0V688c0-2-7-2-7 0c0 1.500 7 1.500 7 0" stroke="#666" strokeWidth="1.100" /></Slot><span className="pt-[2px]">Data Source</span>
      </div>
      <div className={`${t} w-[56px] pt-[2px] pl-[6px]`}>Sheet 1</div>
      <div className={`${t} w-[57px] pt-[2px] pl-[5px]`}>Sheet 2</div>
      <div className={`${t} w-[57px] pt-[2px] pl-[5px]`}>Sheet 3</div>
      <div className={`${t} w-[57px] pt-[2px] pl-[5px]`}>Sheet 4</div>
      <div className={`${t} w-[57px] bg-[#fafafa] pl-[5px] font-semibold text-[#444]`}>Sheet 5</div>
      <div className={`${t} w-[102px]`}>
        <Slot x={415} y={678} w={23} h={28}><path d="M422.500 686.500h10v10h-10zM427.500 686.500v10M422.500 691.500h10" stroke="#666" /></Slot>
        <span className="pt-[2px]">Dashboard 1</span>
      </div>
      {['Story 1', 'Story 2'].map((s, i) => (
        <div key={s} className={`${t} ${i ? 'w-[74px]' : 'w-[71px]'}`}>
          <Slot x={0} y={678} w={23} h={28}><path d="M7.500 687.500h3l2 1.500 2-1.500h3v8h-3l-2 1.500-2-1.500h-3zM12.500 689v8" stroke="#666" strokeWidth="1.100" /></Slot><span className="pt-[2px]">{s}</span>
        </div>
      ))}
      <div className={`${t} w-[32px]`}><Slot x={662} y={678} w={31} h={28}><path d="M679 696.500h-8.500v-10h12v6M673.500 694v-2M676.500 694v-4M679.500 692v-3" stroke="#666" /><path d="M678.500 696.500h6.500M681.800 693v7" stroke="#444" strokeWidth="1.600" /></Slot></div>
      <div className={`${t} w-[32px]`}><Slot x={693} y={678} w={31} h={28}><path d="M702.500 686.500h11v6M702.500 686.500v9.500h7M707.500 686.500v10M702.500 691.500h11" stroke="#666" /><path d="M710.500 696.500h6.500M713.800 693v7" stroke="#444" strokeWidth="1.600" /></Slot></div>
      <div className={`${t} w-[32px]`}><Slot x={725} y={678} w={31} h={28}><path d="M734.500 686.500h3l2 1.500 2-1.500h3v6M734.500 686.500v8h3l2 1.500M739.500 688v8" stroke="#666" /><path d="M742 696.500h6.500M745.300 693v7" stroke="#444" strokeWidth="1.600" /></Slot></div>
    </div>
  );
}

function StatusBar() {
  return (
    <div className="flex h-[21px] shrink-0 items-center bg-[#ebebeb] pl-[3px] text-[11px] text-[#333]">
      <span className="w-[64px] pt-px tracking-[-0.15px]">24 marks</span>
      <span className="w-[119px] pt-px whitespace-nowrap tracking-[-0.15px]">1 row by 18 columns</span>
      <span className="w-[800px] pt-px tracking-[-0.04px]">SUM(Subscribers (millions)): 3,607.2</span>
      <Slot x={986} y={707} w={380} h={21}>
        <path d="M999.500 707v21M1126.500 707v21M1153.500 707v21M1180.500 707v21M1227.500 707v21M1298.500 707v21" stroke="#cbcbcb" />
        <path d="M1236.500 714v7M1289.500 714v7" stroke="#b4b4b4" strokeWidth="1.500" />
        <path d="M1242 714v7l-4-3.500zM1257 714v7l-4-3.500zM1269 714v7l4-3.500zM1284 714v7l4-3.500z" fill="#b4b4b4" />
        {[1307, 1311, 1315].map((x) => [712, 716, 720].map((y) => <rect key={`${x}${y}`} x={x} y={y} width="3" height="3" fill="#bbb" />))}
        <path d="M1328 712h11v6h-11zM1328 720h3v3h-3zM1332 720h3v3h-3zM1336 720h3v3h-3z" fill="#bbb" />
        <path d="M1349 712h11v11h-11z" fill="#666" />
      </Slot>
    </div>
  );
}

function Taskbar() {
  return (
    <div className="flex h-10 shrink-0 bg-linear-to-r from-[#d7eac3] via-[#d6e8bf] to-[#d3e6c3] font-['Noto_Sans']">
      <Slot x={0} y={728} w={205} h={40}>
        <path d="M16 742.200l6.500-1v6.300H16zM23.500 741l8.500-1.200v7.700h-8.500zM16 748.500h6.500v6.300l-6.500-1zM23.500 748.500H32v7.700l-8.500-1.200z" fill="#000" />
        <g stroke="#000" strokeWidth="1.400">
          <circle cx="74" cy="745.500" r="5.300" /><path d="M70 749.500l-6 6" />
          <circle cx="120" cy="748" r="6.900" strokeWidth="2.200" />
          <path d="M160.500 740v3.500h10V740M160.500 756v-3.500h10v3.500M160.500 745.500h10v5h-10zM174.500 740v2.500M174.500 748v8" strokeWidth="1.200" />
        </g>
        <path d="M173 744h3v3h-3z" fill="#000" />
      </Slot>
      <div className="flex w-[47px] items-center pl-[3px]"><FaEdgeLegacy size={23} color="#0078d7" /></div>
      <Slot x={252} y={728} w={188} h={40}>
        <path d="M264 742v-2c0-4 7-4 7 0v2M267 742v-2c0-3 4.500-3 4.500 0v2" stroke="#222" />
        <path d="M256 742h23v15.500c0 1-1 1.500-2 1.500h-19c-1 0-2-.5-2-1.500z" fill="#000" />
        <path d="M262 745h5v5h-5z" fill="#f25022" /><path d="M268 745h5v5h-5z" fill="#7fba00" />
        <path d="M262 751h5v5h-5z" fill="#00a4ef" /><path d="M268 751h5v5h-5z" fill="#ffb900" />
        <path d="M306 739h9l2 2h10v16h-21z" fill="#ffd45e" /><path d="M306 739h9l1.500 2-1.500 2h-9z" fill="#d99d1b" />
        <path d="M310 748h15v10h-4v-5h-7v5h-4z" fill="#3b99dd" />
        <path d="M354 744l12-7 12 7v14h-24z" fill="#000" /><path d="M355.500 744.500h21l-9 4.500 6 4.500-6.500-2.500z" fill="#f2f6e8" />
        <circle cx="415" cy="748" r="12" fill="#34a853" />
        <path d="M415 748L404.600 742A12 12 0 0 1 425.400 742z" fill="#ea4335" />
        <path d="M404.600 742L409.800 751L415 748z" fill="#ea4335" />
        <path d="M415 742h10.400A12 12 0 0 1 415 760l5-9z" fill="#fbbc04" />
        <circle cx="415" cy="748" r="6.200" fill="#fff" /><circle cx="415" cy="748" r="4.800" fill="#4285f4" />
      </Slot>
      <div className="h-10 w-12 border-b-3 border-[#e4006d] bg-[#ecf4df]">
        <Slot x={440} y={728} w={48} h={37}>
          <path d="M453 738h22v21h-22z" fill="#f7f7f7" /><path d="M453 759h22.500M475 738v21" stroke="#bbb" />
          <g transform="translate(464 748) scale(1.450)"><TableauMark x={0} y={0} /></g>
        </Slot>
      </div>
      <div className="grow" />
      <Slot x={1140} y={728} w={79} h={40}>
        <path d="M1147.500 751l5.500-5.500 5.500 5.500" stroke="#000" strokeWidth="1.300" />
        <path d="M1170.500 744.500h12v8h-12zM1183.500 746.500v4" stroke="#000" strokeWidth="1.300" /><path d="M1172 746h4v5h-4z" fill="#000" />
        <g stroke="#333" strokeWidth="1.200"><path d="M1202 755c0-3 2-5 6-5.500M1199.500 755c0-4.500 3-7.500 8.500-8" /><path d="M1196.500 754c1-6 5-9.500 11.500-10" stroke="#777" /></g>
        <circle cx="1206.500" cy="753.500" r="1.600" fill="#000" />
      </Slot>
      <div className="flex w-[34px] items-center text-[12px] tracking-[-0.5px]">ENG</div>
      <div className="flex w-[56px] flex-col items-center pt-[2px] text-[12px] leading-[18px] tracking-[-0.5px] whitespace-nowrap">
        <span>12:39 AM</span><span>10/9/2023</span>
      </div>
      <Slot x={1309} y={728} w={57} h={40}>
        <path d="M1325 740h16v12h-5l-5 3v-3h-6z" fill="#000" />
        <path d="M1328 743.500h10M1328 746.500h10M1328 749.500h7" stroke="#dcebc8" />
        <circle cx="1340.500" cy="755.500" r="7.800" fill="#d2d5cf" stroke="#888" />
        <text x="1337.200" y="760" fontSize="12" fontWeight="600" fill="#111">2</text>
        <path d="M1361.500 728v40" stroke="#a9b89b" />
      </Slot>
    </div>
  );
}

export default function App() {
  return (
    <div className="relative flex h-[768px] w-[1366px] flex-col overflow-hidden bg-[#f5f5f5] font-['Inter',sans-serif] leading-normal">
      <TitleBar />
      <MenuBar />
      <Toolbar />
      <div className="flex h-[593px] shrink-0">
        <DataPane />
        <Cards />
        <main className="ml-[6px] flex grow flex-col gap-[6px]">
          <Shelf label="Columns" pill="Country" />
          <Shelf label="Rows" pill="SUM(Subscribers (m.." rows />
          <Chart />
        </main>
      </div>
      <SheetTabs />
      <StatusBar />
      <Taskbar />
      <ShowMe />
    </div>
  );
}
